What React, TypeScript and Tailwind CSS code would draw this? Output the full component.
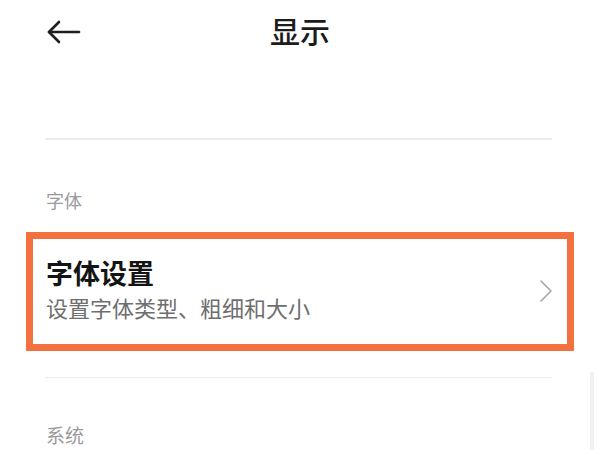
import React from 'react';

const FONT = '"Noto Sans CJK SC", "Noto Sans", sans-serif';

/** Back arrow in the top bar */
const BackArrow: React.FC = () => (
  <svg width="34" height="24" viewBox="0 0 34 24" fill="none" stroke="#1f1f1f" strokeWidth="2.6" strokeLinecap="round" strokeLinejoin="round">
    <path d="M2 12h30" />
    <path d="M12 2 2 12l10 10" />
  </svg>
);

/** Thin disclosure chevron */
const Chevron: React.FC = () => (
  <svg width="14" height="24" viewBox="0 0 14 24" fill="none" stroke="#a6a6a6" strokeWidth="1.6" strokeLinecap="round" strokeLinejoin="round">
    <path d="M2 2l10 10-10 10" />
  </svg>
);

export default function App() {
  return (
    <div className="relative w-[600px] h-[450px] overflow-hidden bg-white" style={{ fontFamily: FONT }}>
      {/* Top bar */}
      <div className="grid grid-cols-[1fr_auto_1fr] items-center h-[60px]">
        <div className="flex items-center pl-[47px] pt-[3px]">
          <BackArrow />
        </div>
        <h1 className="text-[30px] leading-none font-medium text-[#1c1c1c]">显示</h1>
        <div />
      </div>

      {/* Divider */}
      <div className="mt-[78px] ml-[45px] mr-[48px] h-[1.5px] bg-[#ececec]" />

      {/* Section: 字体 */}
      <div className="mt-[51px] pl-[46px] text-[18px] leading-none text-[#9a9a9e]">字体</div>

      <div className="mt-[23px] ml-[26px] w-[548px] h-[119px] border-[7px] border-[#f3703f] flex items-center pl-[13px] pr-[14px]">
        <div className="flex-1 flex flex-col pb-[6px]">
          <div className="text-[27px] leading-[1.4] font-bold text-[#141414]">字体设置</div>
          <div className="text-[22px] leading-[1.4] text-[#6e6e6e]">设置字体类型、粗细和大小</div>
        </div>
        <Chevron />
      </div>

      {/* Divider */}
      <div className="mt-[26px] ml-[45px] mr-[48px] h-[1.5px] bg-[#ececec]" />

      {/* Section: 系统 */}
      <div className="mt-[47px] pl-[46px] text-[19px] leading-none text-[#9a9a9e]">系统</div>

      {/* Scrollbar */}
      <div className="absolute right-[6px] top-[372px] w-[4px] h-[78px] bg-[#f1f1f1]" />
    </div>
  );
}
